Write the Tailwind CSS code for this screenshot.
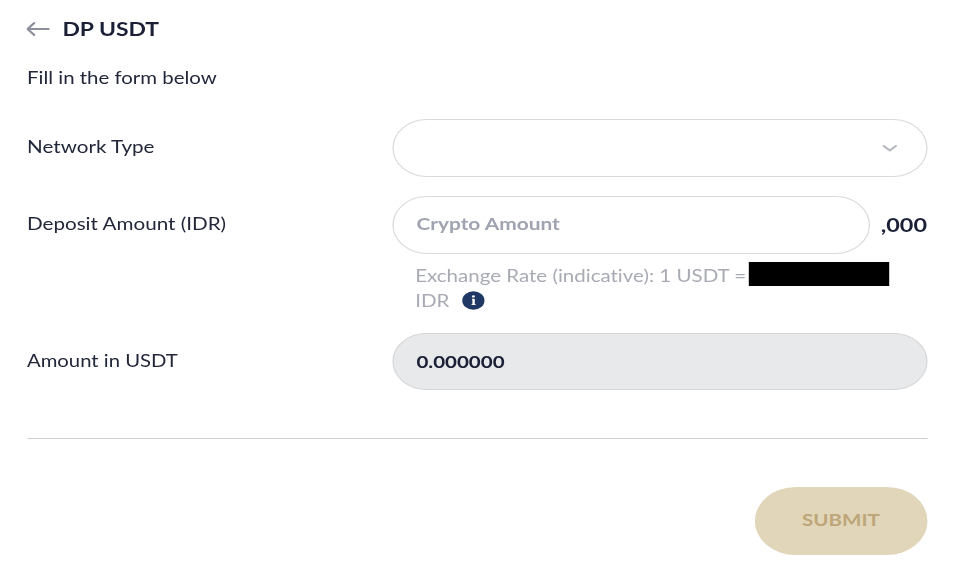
<!DOCTYPE html>
<html lang="en">
  <head>
    <meta charset="UTF-8" />
    <meta name="viewport" content="width=device-width, initial-scale=1.0" />
    <title>DP USDT</title>
    <script src="https://cdn.jsdelivr.net/npm/@tailwindcss/browser@4"></script>
  </head>

  <body class="h-screen overflow-hidden bg-white">
    <!-- Everything is set wide, at 1.2 times its natural width -->
    <main
      class="w-[795px] h-[571px] origin-top-left scale-x-[1.2] pl-[22.5px] pr-[22.5px] pt-[14px] font-[Lato,sans-serif] text-[17.2px] text-[#22273a] [font-variant-ligatures:none]"
    >
      <!-- Header -->
      <header class="flex items-center h-[30px]">
        <a href="#" aria-label="Back">
          <svg
            class="block w-5 h-4 -ml-[0.500px] text-[#8e8f9c]"
            viewBox="0 0 20 16"
            fill="none"
            stroke="currentColor"
            stroke-width="1.9"
            stroke-linecap="round"
            stroke-linejoin="round"
          >
            <path d="M18.500 8H1M6.500 2L1 8l5.500 6" />
          </svg>
        </a>
        <h1 class="ml-[10px] text-[19.1px] font-bold text-[#1b2036]">DP USDT</h1>
      </header>
      <p class="mt-[21px] h-[25px] leading-[25px] text-[17px]">Fill in the form below</p>

      <form>
        <!-- Network type -->
        <div class="flex mt-[29px] h-[58px]">
          <label class="w-[304px] leading-[55px]" for="network">Network Type</label>
          <button
            id="network"
            type="button"
            class="flex flex-1 items-center justify-end rounded-full border border-[#d9dadb] pr-[24px]"
          >
            <svg
              class="w-[13px] h-2 text-[#b9bbc2]"
              viewBox="0 0 13 8"
              fill="none"
              stroke="currentColor"
              stroke-width="2"
              stroke-linecap="round"
              stroke-linejoin="round"
            >
              <path d="M1.500 2l5 4.500 5-4.500" />
            </svg>
          </button>
        </div>

        <!-- Deposit amount -->
        <div class="flex mt-[19px] h-[58px]">
          <label class="w-[304px] leading-[55px]" for="deposit">Deposit Amount (IDR)</label>
          <input
            id="deposit"
            type="text"
            placeholder="Crypto Amount"
            class="w-[398px] rounded-full border border-[#d9dadb] px-[19.500px] pb-[2px] text-[17.4px] font-bold placeholder:text-[#a0a3b0]"
          />
          <span class="ml-auto text-[19.500px] leading-[58px] font-bold text-[#1b2036]">,000</span>
        </div>
        <div class="ml-[323.500px] mt-[9px] leading-[25px] text-[17.1px] text-[#a9abb4]">
          <div class="flex h-[25px]">
            Exchange Rate (indicative): 1 USDT =
            <span class="ml-[2.500px] -mt-px h-[24px] w-[117px] bg-black"></span>
          </div>
          <div class="flex items-center h-[25px]">
            IDR
            <svg class="ml-[10.500px] size-[19px]" viewBox="0 0 19 19">
              <circle cx="9.500" cy="9.500" r="9.300" fill="#203864" />
              <circle cx="9.500" cy="5.400" r="1.200" fill="#fff" />
              <path d="M8.300 8.200h1.500v5.300M8 13.500h3.300" stroke="#fff" stroke-width="1" fill="none" />
              <path d="M9.600 8v5.500" stroke="#fff" stroke-width="1.900" fill="none" />
            </svg>
          </div>
        </div>

        <!-- Converted amount -->
        <div class="flex mt-[20px] h-[57px]">
          <label class="w-[304px] leading-[56px] text-[16.9px]" for="amount">Amount in USDT</label>
          <input
            id="amount"
            type="text"
            value="0.000000"
            readonly
            class="flex-1 rounded-full border border-[#d5d6d8] bg-[#e8e9eb] px-[19.500px] text-[17.1px] font-bold text-[#1b2036]"
          />
        </div>

        <hr class="mt-[48px] border-[#cfcfcf]" />
        <div class="flex justify-end mt-[48px]">
          <button
            type="submit"
            class="h-[67.500px] w-[143.500px] rounded-full bg-[#e2d6ba] pb-px text-[17.1px] font-bold text-[#bda679]"
          >
            SUBMIT
          </button>
        </div>
      </form>
    </main>
  </body>
</html>
